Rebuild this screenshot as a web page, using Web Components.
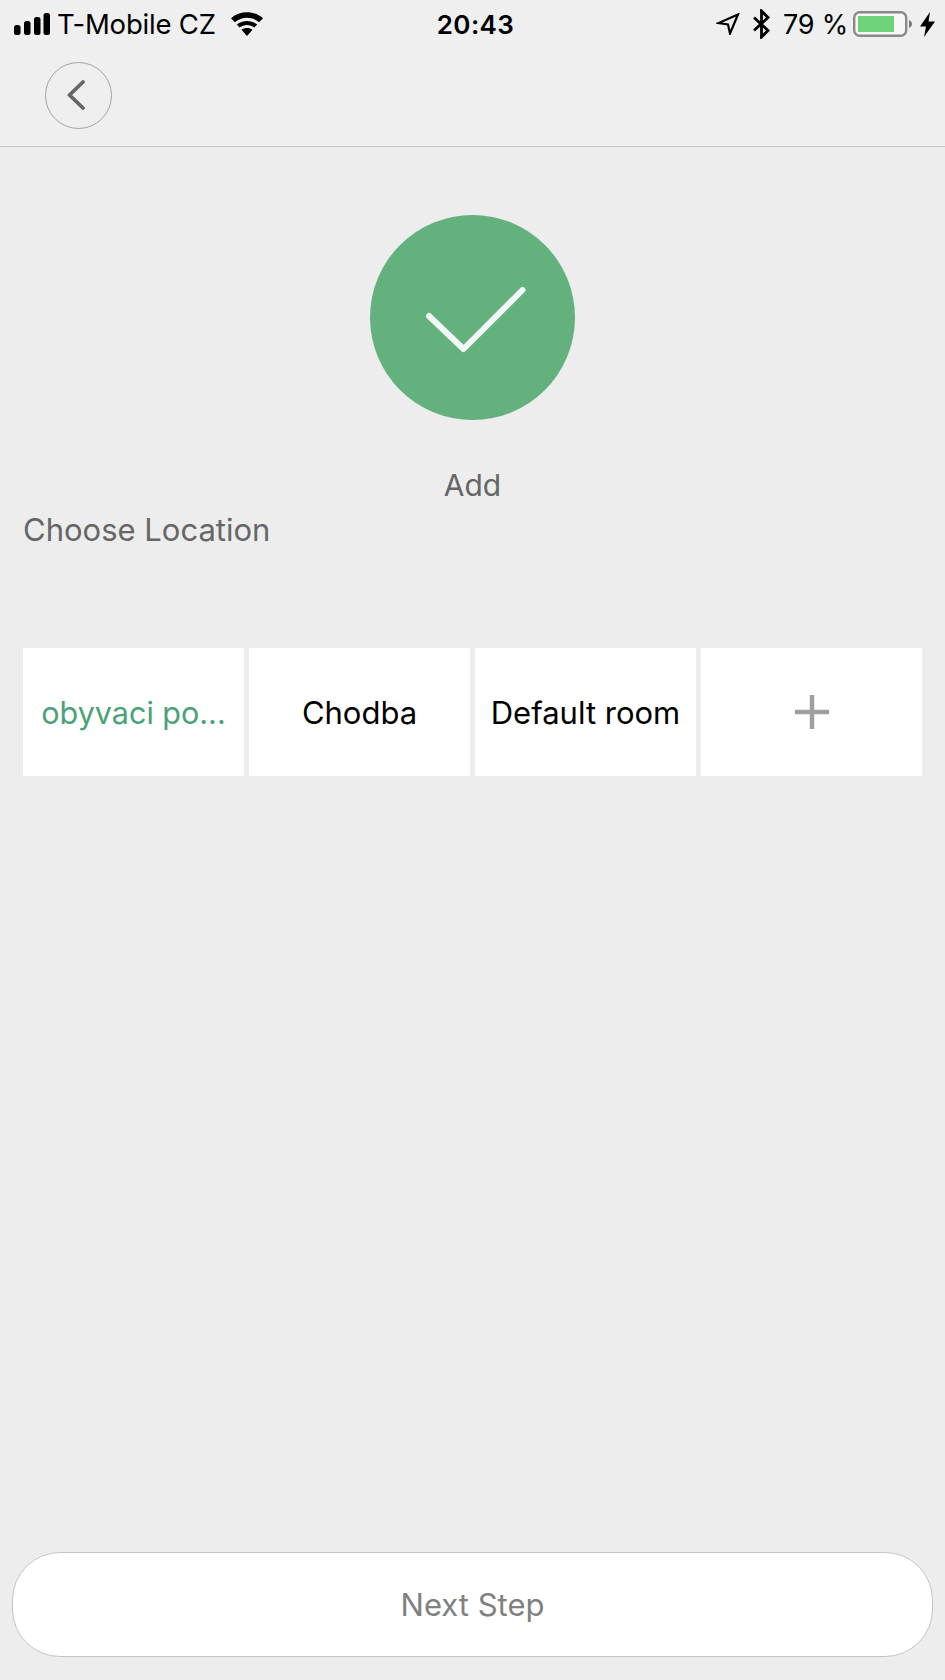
<!DOCTYPE html>
<html>
<head>
<meta charset="utf-8">
<style>
  html, body { margin: 0; padding: 0; }
  body {
    width: 945px;
    height: 1680px;
    overflow: hidden;
    background: #ededed;
    font-family: Inter, Roboto, "Liberation Sans", sans-serif;
  }
  #app { display: flex; flex-direction: column; height: 1680px; }
</style>
</head>
<body>
<div id="app">
  <status-bar></status-bar>
  <nav-bar></nav-bar>
  <add-state>Add</add-state>
  <section-title>Choose Location</section-title>
  <room-list>
    <room-tile selected>obyvaci po...</room-tile>
    <room-tile>Chodba</room-tile>
    <room-tile>Default room</room-tile>
    <room-tile add></room-tile>
  </room-list>
  <next-button>Next Step</next-button>
</div>

<script>
class StatusBar extends HTMLElement {
  constructor () {
    super();
    this.attachShadow({ mode: "open" });
  }

  connectedCallback () {
    this.shadowRoot.innerHTML = /* html */`
    <style>
      :host {
        display: grid;
        grid-template-columns: 1fr auto 1fr;
        align-items: center;
        height: 48px;
        padding: 0 8px 0 14px;
        background: #efefef;
        color: #000;
        font-size: 27px;
      }
      .left, .right { display: flex; align-items: center; }
      .right { justify-content: flex-end; }
      .carrier { margin-left: 7px; margin-right: 15px; font-size: 27.5px; letter-spacing: -.2px; }
      .time { font-weight: 600; font-size: 26px; letter-spacing: .4px; }
      .pct { margin: 0 5px 0 12px; letter-spacing: -.2px; }
      .bolt { margin: 0 2px 0 7px; }
      svg { display: block; flex: none; }
    </style>
    <div class="left">
      <svg width="36" height="22" viewBox="0 0 36 22">
        <rect x="0" y="12" width="6.5" height="10" rx="2.5"/>
        <rect x="10" y="8" width="6.5" height="14" rx="2.5"/>
        <rect x="20" y="4" width="6.5" height="18" rx="2.5"/>
        <rect x="29.5" y="0" width="6.5" height="22" rx="2.5"/>
      </svg>
      <span class="carrier">T-Mobile CZ</span>
      <svg width="32" height="24" viewBox="0 0 32 24">
        <path d="M16 24l-5.500-6.200c3.200-2.400 7.800-2.400 11 0z"/>
        <path d="M8.600 15.600L5.800 12.500c5.800-4.800 14.600-4.800 20.400 0l-2.800 3.100c-4.300-3.400-10.500-3.400-14.800 0z"/>
        <path d="M3.900 10.300L0 6.200c9-7.800 23-7.800 32 0l-3.900 4.100c-6.900-6-17.300-6-24.200 0z"/>
      </svg>
    </div>
    <div class="time">20:43</div>
    <div class="right">
      <svg width="24" height="22" viewBox="0 0 24 22">
        <path d="M22 1.500L2.500 10l9.500 1.500 2 9z" fill="none" stroke="#000" stroke-width="2.200" stroke-linejoin="miter"/>
      </svg>
      <svg style="margin-left:12px" width="19" height="30" viewBox="0 0 19 30">
        <path d="M2 8.500l14 13-6.500 6.500V2L16 8.500l-14 13" fill="none" stroke="#000" stroke-width="2.800"/>
      </svg>
      <span class="pct">79 %</span>
      <svg width="60" height="26" viewBox="0 0 60 26">
        <rect x="1.200" y="1.200" width="52" height="23.600" rx="5.500" fill="#f7f7f7" stroke="#8a8a8a" stroke-width="2.400"/>
        <rect x="5" y="5" width="36" height="16" fill="#70d278"/>
        <path d="M56 9c2 .8 3 2.300 3 4s-1 3.200-3 4z" fill="#777"/>
      </svg>
      <svg class="bolt" width="15" height="25" viewBox="0 0 15 25">
        <path d="M10 0L0 14.500h6L4 25 15 9.500H8.500z"/>
      </svg>
    </div>
    `;
  }
}

class NavBar extends HTMLElement {
  constructor () {
    super();
    this.attachShadow({ mode: "open" });
  }

  connectedCallback () {
    this.shadowRoot.innerHTML = /* html */`
    <style>
      :host {
        display: flex;
        align-items: center;
        box-sizing: border-box;
        height: 99px;
        padding: 0 0 4px 45px;
        background: #efefef;
        border-bottom: 1px solid #c6c6c6;
      }
      .back {
        display: flex;
        align-items: center;
        justify-content: center;
        box-sizing: border-box;
        width: 67px;
        height: 67px;
        border: 1px solid #a4a4a4;
        border-radius: 50%;
      }
      svg { display: block; margin-left: -6px; }
    </style>
    <div class="back">
      <svg width="20" height="30" viewBox="0 0 20 30">
        <path d="M17 2L3.500 15 17 28" fill="none" stroke="#666" stroke-width="3.800" stroke-linecap="round" stroke-linejoin="round"/>
      </svg>
    </div>
    `;
  }
}

class AddState extends HTMLElement {
  constructor () {
    super();
    this.attachShadow({ mode: "open" });
  }

  connectedCallback () {
    this.shadowRoot.innerHTML = /* html */`
    <style>
      :host {
        display: flex;
        flex-direction: column;
        align-items: center;
        padding-top: 68px;
        color: #666;
        font-size: 30px;
      }
      .circle {
        width: 205px;
        height: 205px;
        border-radius: 50%;
        background: #63b27e;
      }
      svg { display: block; }
      p { margin: 46px 0 0; line-height: 38px; }
    </style>
    <div class="circle">
      <svg width="205" height="205" viewBox="0 0 205 205">
        <path d="M59 101l34.500 33 59-59" fill="none" stroke="#f4f8f5" stroke-width="6" stroke-linecap="round" stroke-linejoin="round"/>
      </svg>
    </div>
    <p><slot></slot></p>
    `;
  }
}

class SectionTitle extends HTMLElement {
  constructor () {
    super();
    this.attachShadow({ mode: "open" });
  }

  connectedCallback () {
    this.shadowRoot.innerHTML = /* html */`
    <style>
      :host {
        display: block;
        padding: 7px 0 0 23px;
        line-height: 38px;
        color: #666;
        font-size: 31px;
      }
    </style>
    <slot></slot>
    `;
  }
}

class RoomList extends HTMLElement {
  constructor () {
    super();
    this.attachShadow({ mode: "open" });
  }

  connectedCallback () {
    this.shadowRoot.innerHTML = /* html */`
    <style>
      :host {
        display: grid;
        grid-template-columns: repeat(4, 221px);
        column-gap: 5px;
        padding: 99px 0 0 23px;
      }
    </style>
    <slot></slot>
    `;
  }
}

class RoomTile extends HTMLElement {
  constructor () {
    super();
    this.attachShadow({ mode: "open" });
  }

  connectedCallback () {
    const isAdd = this.hasAttribute("add");

    this.shadowRoot.innerHTML = /* html */`
    <style>
      :host {
        display: flex;
        align-items: center;
        justify-content: center;
        height: 128px;
        background: #fff;
        color: #000;
        font-size: 31px;
        white-space: nowrap;
      }
      :host([selected]) { color: #4aa278; font-size: 30.500px; }
      svg { display: block; }
    </style>
    ${isAdd
      ? `<svg width="36" height="36" viewBox="0 0 36 36"><path d="M18 1v34M1 18h34" fill="none" stroke="#a0a0a0" stroke-width="4.500"/></svg>`
      : `<slot></slot>`}
    `;
  }
}

class NextButton extends HTMLElement {
  constructor () {
    super();
    this.attachShadow({ mode: "open" });
  }

  connectedCallback () {
    this.shadowRoot.innerHTML = /* html */`
    <style>
      :host {
        display: flex;
        align-items: center;
        justify-content: center;
        box-sizing: border-box;
        height: 105px;
        margin: auto 12px 23px;
        background: #fff;
        border: 1px solid #c4c4c4;
        border-radius: 48px;
        color: #808080;
        font-size: 31px;
      }
    </style>
    <slot></slot>
    `;
  }
}

customElements.define("status-bar", StatusBar);
customElements.define("nav-bar", NavBar);
customElements.define("add-state", AddState);
customElements.define("section-title", SectionTitle);
customElements.define("room-list", RoomList);
customElements.define("room-tile", RoomTile);
customElements.define("next-button", NextButton);
</script>
</body>
</html>
